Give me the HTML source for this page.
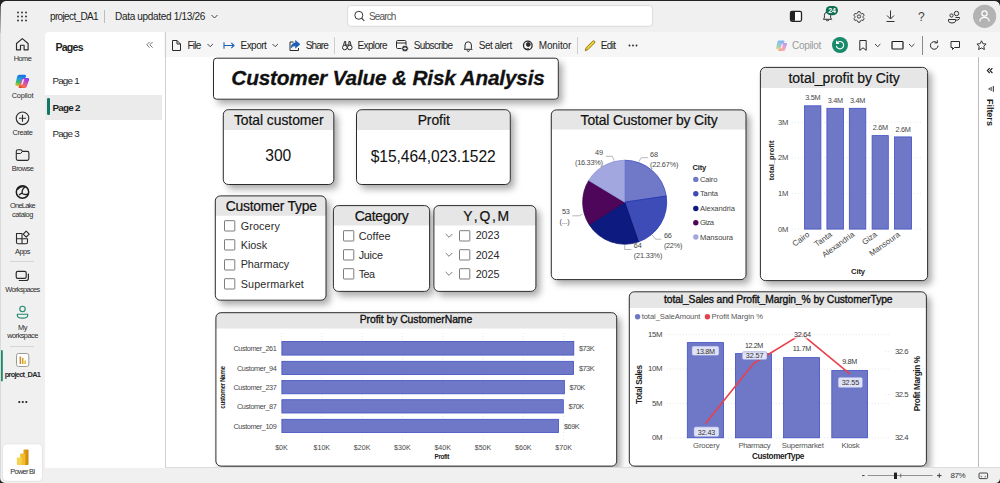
<!DOCTYPE html>
<html lang="en"><head><meta charset="utf-8"><title>project_DA1 - Power BI</title>
<style>
*{box-sizing:border-box;margin:0;padding:0}
html,body{width:1000px;height:483px;overflow:hidden;background:#f0f0f0;font-family:"Liberation Sans",sans-serif;color:#242424}
.abs{position:absolute}
#top{position:absolute;left:0;top:0;width:1000px;height:33px;background:#f0f0f0}
#nav{position:absolute;left:0;top:33px;width:45px;height:450px;background:#f0f0f0}
#pages{position:absolute;left:45px;top:32px;width:120px;height:436px;background:#fff;border-radius:4px 0 0 0}
#tool{position:absolute;left:164px;top:32px;width:836px;height:25px;background:#f6f6f6}
#canvas{position:absolute;left:166px;top:57px;width:812px;height:411px;background:#fff}
#filters{position:absolute;left:978px;top:57px;width:22px;height:411px;background:#fff;border-left:1px solid #bdbdbd}
#status{position:absolute;left:0;top:468px;width:1000px;height:15px;background:#f0f0f0}
.t{position:absolute;white-space:nowrap;line-height:1}
.nl{position:absolute;left:0;width:45px;text-align:center;font-size:7px;color:#333;line-height:1;white-space:nowrap}
.card{position:absolute;background:#fff;border:1px solid #333;border-radius:5px;box-shadow:2px 3px 4px rgba(0,0,0,.45);overflow:hidden}
.hd{position:absolute;left:0;top:0;right:0;background:#e6e6e6;text-align:center;color:#111;white-space:nowrap}
.cb{position:absolute;width:10px;height:10px;border:1px solid #555;background:#fff}
svg{position:absolute;overflow:visible}
svg text{font-family:"Liberation Sans",sans-serif}
</style></head><body>
<div id="top"></div>
<div id="nav"></div>
<div id="pages"></div>
<div id="tool"></div>
<div id="canvas"></div>
<div id="filters"></div>
<div id="status"></div>
<!-- top bar -->
<svg class="abs" style="left:0;top:0" width="1000" height="33" viewBox="0 0 1000 33">
  <!-- window dark corners -->
  <defs><linearGradient id="wl" x1="0" y1="0" x2="0" y2="1"><stop offset="0" stop-color="#222"/><stop offset="1" stop-color="#222" stop-opacity=".25"/></linearGradient></defs><path d="M0 0H1000V6A5 5 0 0 0 995 1H5.800A5 5 0 0 0 .8 6V33H0Z" fill="url(#wl)"/><path d="M0 0H1000V6A5 5 0 0 0 995 1H5.800A5 5 0 0 0 .8 6H0Z" fill="#222"/>
  <!-- waffle -->
  <g fill="#333">
    <circle cx="18" cy="12.5" r="0.95"/><circle cx="22" cy="12.5" r="0.95"/><circle cx="26" cy="12.5" r="0.95"/>
    <circle cx="18" cy="16.5" r="0.95"/><circle cx="22" cy="16.5" r="0.95"/><circle cx="26" cy="16.5" r="0.95"/>
    <circle cx="18" cy="20.5" r="0.95"/><circle cx="22" cy="20.5" r="0.95"/><circle cx="26" cy="20.5" r="0.95"/>
  </g>
  <rect x="104" y="10" width="1" height="13" fill="#bdbdbd"/>
  <path d="M211.5 15l3 3 3-3" fill="none" stroke="#444" stroke-width="1"/>
  <!-- search -->
  <rect x="347.600" y="5.600" width="305" height="20.700" rx="3" fill="#fff" stroke="#dadada"/>
  <circle cx="358.800" cy="15.300" r="4" fill="none" stroke="#333" stroke-width="1"/>
  <path d="M361.700 18.200l2.600 2.800" stroke="#333" stroke-width="1.100"/>
  <!-- panel icon -->
  <rect x="790.500" y="11.300" width="11" height="10" rx="1.500" fill="#fff" stroke="#222" stroke-width="1.300"/>
  <rect x="791" y="11.800" width="4" height="9" fill="#222"/>
  <!-- bell -->
  <path d="M823.300 19.300h8.400l-1.100-1.400v-2.700a3.100 3.100 0 0 0-6.200 0v2.700z" fill="none" stroke="#333" stroke-width="1" stroke-linejoin="round"/>
  <path d="M826.200 19.600a1.300 1.300 0 0 0 2.600 0" fill="none" stroke="#333" stroke-width="1"/>
  <rect x="825.800" y="5.900" width="12.200" height="9.300" rx="4.650" fill="#0e6e52"/>
  <!-- gear -->
  <g transform="translate(859,16.500) scale(.92)" fill="none" stroke="#333" stroke-width="1">
    <circle r="1.800"/>
    <path d="M-1.100 -5.200h2.200l.5 1.500 1.400.8 1.500-.4 1.100 1.900-1.100 1.100v1.600l1.100 1.100-1.100 1.900-1.500-.4-1.400.8-.5 1.500h-2.200l-.5-1.500-1.400-.8-1.500.4-1.100-1.900 1.100-1.100v-1.600l-1.100-1.100 1.100-1.900 1.500.4 1.400-.8z"/>
  </g>
  <!-- download -->
  <path d="M890.500 10.500v8M887 15.500l3.500 3.500 3.500-3.500M886.500 21.500h8" fill="none" stroke="#333" stroke-width="1"/>
  <!-- people -->
  <g fill="none" stroke="#333" stroke-width="1">
    <circle cx="956.500" cy="13.500" r="2.200"/><circle cx="951.500" cy="15.500" r="1.600"/>
    <path d="M948.500 19.500h7v1.500a3.500 2 0 0 1-7 0zM955.500 17.500h4v1a3 2 0 0 1-4 1.500"/>
  </g>
  <!-- avatar -->
  <circle cx="984.600" cy="16.300" r="11.600" fill="#b3b3b3"/>
  <circle cx="984.500" cy="13.500" r="2.600" fill="none" stroke="#fff" stroke-width="1.200"/>
  <path d="M979.800 21.500a4.700 4.200 0 0 1 9.400 0" fill="none" stroke="#fff" stroke-width="1.200"/>
</svg>
<div class="t" style="left:50.00px;top:11.80px;font-size:10px;color:#222;letter-spacing:-0.639px;">project_DA1</div>
<div class="t" style="left:115.00px;top:11.80px;font-size:10px;color:#222;letter-spacing:-0.309px;">Data updated 1/13/26</div>
<div class="t" style="left:369.00px;top:12.20px;font-size:10px;color:#555;letter-spacing:-0.864px;">Search</div>
<div class="t" style="left:828.15px;top:7.46px;font-size:7px;color:#fff;letter-spacing:-0.143px;font-weight:bold;">24</div>
<div class="t" style="left:917.96px;top:10.76px;font-size:12px;color:#444;">?</div>

<svg class="abs" style="left:0;top:33px" width="45" height="450" viewBox="0 33 45 450">
<!-- home -->
<path d="M16.500 49.800v-6.300l5.800-4.900 5.800 4.900v6.300h-4v-4.600h-3.600v4.600z" fill="none" stroke="#2a2a2a" stroke-width="1.150" stroke-linejoin="round"/>
<!-- copilot -->
<defs>
<linearGradient id="cgA" x1=".3" y1="0" x2=".1" y2="1"><stop offset="0" stop-color="#1b6fe4"/><stop offset=".35" stop-color="#22a0d8"/><stop offset=".65" stop-color="#3dbb63"/><stop offset="1" stop-color="#f6c21f"/></linearGradient>
<linearGradient id="cgB" x1=".8" y1="0" x2=".2" y2="1"><stop offset="0" stop-color="#7a3ff0"/><stop offset=".45" stop-color="#d94fb0"/><stop offset=".8" stop-color="#f2704a"/><stop offset="1" stop-color="#f03a22"/></linearGradient>
</defs>
<path d="M17.200 76.300Q17.700 74.800 19.300 74.800H24.800Q26.500 74.800 25.900 76.400L23.100 84.600Q22.600 86 21.100 86H16.700Q14.800 86 15.400 84.200Z" fill="url(#cgA)"/>
<path d="M21.700 79.400Q22.200 78 23.700 78H27.800Q29.700 78 29.100 79.700L26.700 86.700Q26.200 88.100 24.700 88.100H19.800Q18.100 88.100 18.700 86.600Z" fill="url(#cgB)"/>
<path d="M22.600 79.600L24.300 78.900L22.700 84.300L21 84.900Z" fill="#fff" opacity=".9"/>
<!-- create -->
<circle cx="22.500" cy="118.300" r="6.300" fill="none" stroke="#2a2a2a" stroke-width="1.100"/>
<path d="M22.500 114.800v7M19 118.300h7" stroke="#2a2a2a" stroke-width="1.100"/>
<!-- browse -->
<path d="M16.300 151.300q0-1.600 1.600-1.600h3l1.600 1.700h4.800q1.600 0 1.600 1.600v5.800q0 1.600-1.600 1.600h-9.400q-1.600 0-1.600-1.600z" fill="none" stroke="#2a2a2a" stroke-width="1.100" stroke-linejoin="round"/>
<path d="M16.300 153.500h4.300l1.900-2.100" fill="none" stroke="#2a2a2a" stroke-width="1"/>
<!-- onelake -->
<circle cx="22.500" cy="192" r="6.200" fill="none" stroke="#1d1d1d" stroke-width="1.500"/>
<path d="M17.500 189.500q3-4 7.500-2.500q-3.500 2.500-2.800 6.500q2.800 1.800 6 .3" fill="none" stroke="#1d1d1d" stroke-width="1.300"/>
<path d="M19.200 195.200q1.500-2.200 3-1.700" fill="none" stroke="#1d1d1d" stroke-width="1.200"/>
<!-- apps -->
<path d="M16.500 233.500h5.500v5.300h-5.500zM16.500 238.800h5.500v5h-4q-1.500 0-1.500-1.500zM22 238.800h5.500v3.500q0 1.500-1.500 1.500h-4z" fill="none" stroke="#2a2a2a" stroke-width="1.100" stroke-linejoin="round"/>
<path d="M26.200 231.200l3 3-3 3-3-3z" fill="none" stroke="#2a2a2a" stroke-width="1.100" stroke-linejoin="round"/>
<rect x="10" y="261" width="24" height="1" fill="#d4d4d4"/>
<!-- workspaces -->
<rect x="16.200" y="271.300" width="10" height="7" rx="1.600" fill="none" stroke="#2a2a2a" stroke-width="1.200"/>
<path d="M28.400 274v4.300q0 2.200-2.200 2.200h-7" fill="none" stroke="#2a2a2a" stroke-width="1.200" stroke-linecap="round"/>
<!-- my workspace -->
<circle cx="22.500" cy="309" r="2.700" fill="none" stroke="#1a8a6a" stroke-width="1.100"/>
<path d="M17.300 314.300h10.400v1.200q0 2.600-5.200 2.600t-5.200-2.600z" fill="none" stroke="#1a8a6a" stroke-width="1.100" stroke-linejoin="round"/>
<rect x="10" y="346" width="24" height="1" fill="#d4d4d4"/>
<!-- project -->
<rect x="1" y="350" width="1.800" height="31.500" rx=".9" fill="#1a8a6a"/>
<rect x="16.500" y="353.500" width="12.300" height="13" rx="2" fill="#fff" stroke="#9a9a9a" stroke-width="1"/>
<rect x="19.600" y="356.500" width="1.500" height="7.500" fill="#c98a1e"/><rect x="22" y="358" width="1.500" height="6" fill="#d9a02b"/><rect x="24.400" y="360.500" width="1.500" height="3.500" fill="#e6b437"/>
<circle cx="19.300" cy="402" r="1.100" fill="#222"/><circle cx="22.800" cy="402" r="1.100" fill="#222"/><circle cx="26.300" cy="402" r="1.100" fill="#222"/>
<!-- power bi card -->
<rect x="2.500" y="443.800" width="40" height="37.500" rx="4.500" fill="#fff" stroke="#e0e0e0" stroke-width=".8"/>
<defs><linearGradient id="pb1" x1="0" y1="0" x2="1" y2="0"><stop offset="0" stop-color="#e8a614"/><stop offset="1" stop-color="#c9860c"/></linearGradient></defs>
<rect x="23.500" y="449.500" width="5" height="15.500" rx=".8" fill="url(#pb1)"/>
<rect x="20.200" y="453.500" width="5" height="11.500" rx=".8" fill="#f0bd2e"/>
<rect x="16.900" y="457.500" width="5" height="7.500" rx=".8" fill="#f6d24f"/>
<!-- bottom-left window corner -->
<rect x="0" y="33" width=".7" height="450" fill="#000" opacity=".13"/><path d="M0 483V478a5 5 0 0 0 5 5z" fill="#222"/>
</svg>
<div class="t" style="left:13.75px;top:55.35px;font-size:7.4px;color:#2b2b2b;letter-spacing:-0.560px;">Home</div>
<div class="t" style="left:11.75px;top:92.05px;font-size:7.4px;color:#2b2b2b;letter-spacing:-0.219px;">Copilot</div>
<div class="t" style="left:12.50px;top:128.65px;font-size:7.4px;color:#2b2b2b;letter-spacing:-0.368px;">Create</div>
<div class="t" style="left:11.75px;top:165.35px;font-size:7.4px;color:#2b2b2b;letter-spacing:-0.529px;">Browse</div>
<div class="t" style="left:10.00px;top:202.25px;font-size:7.4px;color:#2b2b2b;letter-spacing:-0.719px;">OneLake</div>
<div class="t" style="left:12.00px;top:210.95px;font-size:7.4px;color:#2b2b2b;letter-spacing:-0.409px;">catalog</div>
<div class="t" style="left:15.00px;top:247.85px;font-size:7.4px;color:#2b2b2b;letter-spacing:-0.467px;">Apps</div>
<div class="t" style="left:5.25px;top:286.35px;font-size:7.4px;color:#2b2b2b;letter-spacing:-0.608px;">Workspaces</div>
<div class="t" style="left:18.00px;top:323.55px;font-size:7.4px;color:#2b2b2b;letter-spacing:-0.432px;">My</div>
<div class="t" style="left:7.25px;top:331.95px;font-size:7.4px;color:#2b2b2b;letter-spacing:-0.541px;">workspace</div>
<div class="t" style="left:4.75px;top:370.65px;font-size:7.4px;color:#2b2b2b;letter-spacing:-0.735px;font-weight:bold;">project_DA1</div>
<div class="t" style="left:10.25px;top:467.95px;font-size:7.4px;color:#2b2b2b;letter-spacing:-0.690px;">Power BI</div>

<div class="abs" style="left:45px;top:94.500px;width:117px;height:25px;background:#ebebeb"></div>
<div class="abs" style="left:47px;top:97.500px;width:2.500px;height:17.500px;background:#117865;border-radius:1.200px"></div>
<div class="abs" style="left:165px;top:32px;width:1px;height:436px;background:#d0d0d0"></div>
<svg class="abs" style="left:146px;top:41px" width="8" height="8" viewBox="0 0 8 8"><path d="M3.600 1L.8 3.800l2.800 2.800M6.600 1L3.800 3.800l2.800 2.800" fill="none" stroke="#555" stroke-width=".8"/></svg>
<div class="t" style="left:55.40px;top:42.49px;font-size:10.6px;color:#1f1f1f;letter-spacing:-0.746px;font-weight:bold;">Pages</div>
<div class="t" style="left:52.40px;top:76.00px;font-size:9.8px;color:#1f1f1f;letter-spacing:-0.760px;">Page 1</div>
<div class="t" style="left:52.40px;top:102.80px;font-size:9.8px;color:#1f1f1f;letter-spacing:-0.682px;font-weight:bold;">Page 2</div>
<div class="t" style="left:52.40px;top:129.00px;font-size:9.8px;color:#1f1f1f;letter-spacing:-0.760px;">Page 3</div>

<svg class="abs" style="left:166px;top:33px" width="834" height="24" viewBox="166 33 834 24"><defs><linearGradient id="cgA2" x1=".3" y1="0" x2=".1" y2="1"><stop offset="0" stop-color="#1b6fe4"/><stop offset=".35" stop-color="#22a0d8"/><stop offset=".65" stop-color="#3dbb63"/><stop offset="1" stop-color="#f6c21f"/></linearGradient><linearGradient id="cgB2" x1=".8" y1="0" x2=".2" y2="1"><stop offset="0" stop-color="#7a3ff0"/><stop offset=".45" stop-color="#d94fb0"/><stop offset=".8" stop-color="#f2704a"/><stop offset="1" stop-color="#f03a22"/></linearGradient></defs>
<g fill="none" stroke="#2a2a2a" stroke-width="1" stroke-linejoin="round">
<!-- file -->
<path d="M172.500 40.500h4.500l3.500 3.500v6.500h-8zM177 40.500v3.500h3.500"/>
<path d="M207.500 44l2.700 2.700 2.700-2.700" stroke="#444"/>
<!-- export -->
<path d="M224 42.300v6.400M224 45.500h10M231.300 42.800l2.700 2.700-2.700 2.700" stroke="#1a5fb4" stroke-width="1.100"/>
<path d="M272.500 44l2.700 2.700 2.700-2.700" stroke="#444"/>
<!-- share -->
<path d="M293.500 42h-3.500v8.500h8.500v-2.500"/>
<path d="M295.500 40.500l4.500 3.800-4.500 3.800v-2.300q-3 0-4.500 2.200 .3-5 4.500-5.300z" fill="#1a5fb4" stroke="#1a5fb4" stroke-width=".6"/>
<!-- explore -->
<circle cx="344.800" cy="47.500" r="2.300"/><circle cx="349.800" cy="47.500" r="2.300"/><path d="M343.500 45.500l1-4h1.200v4M351.100 45.500l-1-4h-1.200v4M346 45h2.600"/>
<!-- subscribe -->
<rect x="396.500" y="40.500" width="9.500" height="8" rx="1.200"/><path d="M396.500 43h9.500"/>
<circle cx="405" cy="48.500" r="3.300" fill="#2a2a2a" stroke="#f6f6f6" stroke-width=".8"/>
<path d="M405 46.800v3.400M403.300 48.500h3.400" stroke="#fff" stroke-width=".9"/>
<!-- bell -->
<path d="M465 48.500v-3.500a3.200 3.200 0 0 1 6.400 0v3.500l.8.800h-8z"/><path d="M467.200 50.300a1.100 1.100 0 0 0 2.200 0"/>
<!-- monitor -->
<circle cx="527.800" cy="45.500" r="4.300" stroke-width="1.300"/><circle cx="528.300" cy="44.500" r="1.900" fill="#2a2a2a"/>
<path d="M524.500 48.500q2 .8 4.500.2"/>
<!-- pencil -->
<path d="M585.300 50.700l.8-2.900 6.600-6.600q.9-.9 1.800 0t0 1.800l-6.600 6.600z" stroke="#8a6a00" fill="#f2d23a" stroke-width=".9"/>
<!-- copilot small -->
<!-- bookmark -->
<path d="M859.800 40.500h6.400v9.800l-3.200-2.500-3.200 2.500z" stroke-width="1"/>
<path d="M875 44l2.700 2.700 2.700-2.700" stroke="#444"/>
<rect x="892" y="41.500" width="11" height="7.500" rx=".8" stroke-width="1.200" stroke="#1a1a1a"/>
<path d="M909 44l2.700 2.700 2.700-2.700" stroke="#444"/>
<!-- refresh -->
<path d="M938 45.500a3.800 3.800 0 1 1-1.300-2.900M937.300 40.300v2.600h-2.600"/>
<!-- comment -->
<path d="M951 41.500h8.500v6h-5l-2 2v-2h-1.500z"/>
<!-- star -->
<path d="M981.500 40.800l1.400 2.900 3.200.4-2.300 2.200.6 3.200-2.900-1.500-2.900 1.500.6-3.200-2.300-2.200 3.200-.4z" stroke-width=".95"/>
</g>
<rect x="334" y="37" width="1" height="17" fill="#cfcfcf"/>
<rect x="577" y="37" width="1" height="17" fill="#cfcfcf"/>
<rect x="922" y="36" width="1" height="19" fill="#8a8a8a"/>
<circle cx="629.500" cy="45.500" r=".9" fill="#222"/><circle cx="633" cy="45.500" r=".9" fill="#222"/><circle cx="636.500" cy="45.500" r=".9" fill="#222"/>
<!-- copilot faded -->
<g opacity=".5" transform="translate(763.700,-19.400) scale(.8)">
<path d="M17.200 76.300Q17.700 74.800 19.300 74.800H24.800Q26.500 74.800 25.900 76.400L23.100 84.600Q22.600 86 21.100 86H16.700Q14.800 86 15.400 84.200Z" fill="url(#cgA2)"/>
<path d="M21.700 79.400Q22.200 78 23.700 78H27.800Q29.700 78 29.100 79.700L26.700 86.700Q26.200 88.100 24.700 88.100H19.800Q18.100 88.100 18.700 86.600Z" fill="url(#cgB2)"/>
<path d="M22.600 79.600L24.300 78.900L22.700 84.300L21 84.900Z" fill="#fff" opacity=".9"/>
</g>
<circle cx="840" cy="45" r="8" fill="#168a6a"/>
<path d="M836.800 43.200a3.700 3.700 0 1 1-.5 2.600M836.600 40.800v2.600h2.600" fill="none" stroke="#fff" stroke-width="1.100"/>
</svg>
<div class="t" style="left:187.40px;top:40.80px;font-size:10px;color:#242424;letter-spacing:-0.703px;">File</div>
<div class="t" style="left:240.50px;top:40.80px;font-size:10px;color:#242424;letter-spacing:-0.533px;">Export</div>
<div class="t" style="left:305.70px;top:40.80px;font-size:10px;color:#242424;letter-spacing:-0.877px;">Share</div>
<div class="t" style="left:357.50px;top:40.80px;font-size:10px;color:#242424;letter-spacing:-0.629px;">Explore</div>
<div class="t" style="left:413.70px;top:40.80px;font-size:10px;color:#242424;letter-spacing:-0.630px;">Subscribe</div>
<div class="t" style="left:478.70px;top:40.80px;font-size:10px;color:#242424;letter-spacing:-0.471px;">Set alert</div>
<div class="t" style="left:538.70px;top:40.80px;font-size:10px;color:#242424;letter-spacing:-0.120px;">Monitor</div>
<div class="t" style="left:600.70px;top:40.80px;font-size:10px;color:#242424;letter-spacing:-0.608px;">Edit</div>
<div class="t" style="left:792.00px;top:40.80px;font-size:10px;color:#9a9a9a;letter-spacing:-0.304px;">Copilot</div>

<svg style="left:166px;top:57px;overflow:hidden" width="812" height="411" viewBox="166 57 812 411"><defs><filter id="sh" x="-10%" y="-15%" width="135%" height="150%"><feDropShadow dx="4" dy="4.500" stdDeviation="3.800" flood-color="#000" flood-opacity=".34"/></filter></defs><rect x="213.50" y="58.20" width="344.80" height="41.00" rx="3" fill="#fff" filter="url(#sh)"/><rect x="213.50" y="58.20" width="344.80" height="41.00" rx="3" fill="none" stroke="#2b2b2b" stroke-width="1"/>
<rect x="223.30" y="109.70" width="110.50" height="74.80" rx="5" fill="#fff" filter="url(#sh)"/><path d="M223.30 130.00V114.70a5 5 0 0 1 5 -5H328.80a5 5 0 0 1 5 5V130.00z" fill="#e6e6e6"/><rect x="223.30" y="109.70" width="110.50" height="74.80" rx="5" fill="none" stroke="#2b2b2b" stroke-width="1"/>
<rect x="356.50" y="109.70" width="153.80" height="74.80" rx="5" fill="#fff" filter="url(#sh)"/><path d="M356.50 130.00V114.70a5 5 0 0 1 5 -5H505.30a5 5 0 0 1 5 5V130.00z" fill="#e6e6e6"/><rect x="356.50" y="109.70" width="153.80" height="74.80" rx="5" fill="none" stroke="#2b2b2b" stroke-width="1"/>
<rect x="215.30" y="195.90" width="110.70" height="104.30" rx="5" fill="#fff" filter="url(#sh)"/><path d="M215.30 215.70V200.90a5 5 0 0 1 5 -5H321.00a5 5 0 0 1 5 5V215.70z" fill="#e6e6e6"/><rect x="215.30" y="195.90" width="110.70" height="104.30" rx="5" fill="none" stroke="#2b2b2b" stroke-width="1"/>
<rect x="333.40" y="205.60" width="96.20" height="85.80" rx="5" fill="#fff" filter="url(#sh)"/><path d="M333.40 225.50V210.60a5 5 0 0 1 5 -5H424.60a5 5 0 0 1 5 5V225.50z" fill="#e6e6e6"/><rect x="333.40" y="205.60" width="96.20" height="85.80" rx="5" fill="none" stroke="#2b2b2b" stroke-width="1"/>
<rect x="433.90" y="205.60" width="102.00" height="85.80" rx="5" fill="#fff" filter="url(#sh)"/><path d="M433.90 225.50V210.60a5 5 0 0 1 5 -5H530.90a5 5 0 0 1 5 5V225.50z" fill="#e6e6e6"/><rect x="433.90" y="205.60" width="102.00" height="85.80" rx="5" fill="none" stroke="#2b2b2b" stroke-width="1"/>
<rect x="551.30" y="109.90" width="194.70" height="169.70" rx="5" fill="#fff" filter="url(#sh)"/><path d="M551.30 129.50V114.90a5 5 0 0 1 5 -5H741.00a5 5 0 0 1 5 5V129.50z" fill="#e6e6e6"/><rect x="551.30" y="109.90" width="194.70" height="169.70" rx="5" fill="none" stroke="#2b2b2b" stroke-width="1"/>
<rect x="760.40" y="67.40" width="167.20" height="213.20" rx="5" fill="#fff" filter="url(#sh)"/><path d="M760.40 87.90V72.40a5 5 0 0 1 5 -5H922.60a5 5 0 0 1 5 5V87.90z" fill="#e6e6e6"/><rect x="760.40" y="67.40" width="167.20" height="213.20" rx="5" fill="none" stroke="#2b2b2b" stroke-width="1"/>
<rect x="215.90" y="312.70" width="400.80" height="153.40" rx="5" fill="#fff" filter="url(#sh)"/><path d="M215.90 328.40V317.70a5 5 0 0 1 5 -5H611.70a5 5 0 0 1 5 5V328.40z" fill="#e6e6e6"/><rect x="215.90" y="312.70" width="400.80" height="153.40" rx="5" fill="none" stroke="#2b2b2b" stroke-width="1"/>
<rect x="629.30" y="291.80" width="297.10" height="174.30" rx="5" fill="#fff" filter="url(#sh)"/><path d="M629.30 307.90V296.80a5 5 0 0 1 5 -5H921.40a5 5 0 0 1 5 5V307.90z" fill="#e6e6e6"/><rect x="629.30" y="291.80" width="297.10" height="174.30" rx="5" fill="none" stroke="#2b2b2b" stroke-width="1"/></svg>
<div class="t" style="left:231.30px;top:67.98px;font-size:20.8px;color:#111;letter-spacing:-0.172px;font-weight:bold;font-style:italic;-webkit-text-stroke:0.3px #111;">Customer Value &amp; Risk Analysis</div>
<div class="t" style="left:233.95px;top:114.37px;font-size:13.9px;color:#111;letter-spacing:-0.048px;-webkit-text-stroke:0.2px #111;">Total customer</div>
<div class="t" style="left:265.35px;top:148.39px;font-size:15.6px;color:#111;letter-spacing:-0.042px;">300</div>
<div class="t" style="left:417.65px;top:114.37px;font-size:13.9px;color:#111;letter-spacing:-0.057px;-webkit-text-stroke:0.2px #111;">Profit</div>
<div class="t" style="left:370.70px;top:148.59px;font-size:15.6px;color:#111;letter-spacing:-0.049px;">$15,464,023.1522</div>
<div class="t" style="left:225.70px;top:200.37px;font-size:13.9px;color:#111;letter-spacing:-0.230px;-webkit-text-stroke:0.2px #111;">Customer Type</div>
<svg style="left:223.4px;top:218.9px" width="14" height="14" viewBox="0 0 14 14"><rect x="1.500" y="1.700" width="10.300" height="10.300" rx=".5" fill="#fff" stroke="#6e6e6e" stroke-width=".9"/></svg>
<div class="t" style="left:240.70px;top:220.78px;font-size:10.8px;color:#2a2a2a;letter-spacing:0.128px;">Grocery</div>
<svg style="left:223.4px;top:238.3px" width="14" height="14" viewBox="0 0 14 14"><rect x="1.500" y="1.700" width="10.300" height="10.300" rx=".5" fill="#fff" stroke="#6e6e6e" stroke-width=".9"/></svg>
<div class="t" style="left:240.70px;top:240.18px;font-size:10.8px;color:#2a2a2a;letter-spacing:0.018px;">Kiosk</div>
<svg style="left:223.4px;top:257.6px" width="14" height="14" viewBox="0 0 14 14"><rect x="1.500" y="1.700" width="10.300" height="10.300" rx=".5" fill="#fff" stroke="#6e6e6e" stroke-width=".9"/></svg>
<div class="t" style="left:240.70px;top:259.48px;font-size:10.8px;color:#2a2a2a;letter-spacing:-0.014px;">Pharmacy</div>
<svg style="left:223.4px;top:276.8px" width="14" height="14" viewBox="0 0 14 14"><rect x="1.500" y="1.700" width="10.300" height="10.300" rx=".5" fill="#fff" stroke="#6e6e6e" stroke-width=".9"/></svg>
<div class="t" style="left:240.70px;top:278.68px;font-size:10.8px;color:#2a2a2a;letter-spacing:0.134px;">Supermarket</div>
<div class="t" style="left:354.65px;top:210.07px;font-size:13.9px;color:#111;letter-spacing:-0.312px;-webkit-text-stroke:0.2px #111;">Category</div>
<svg style="left:341.6px;top:228.7px" width="14" height="14" viewBox="0 0 14 14"><rect x="1.500" y="1.700" width="10.300" height="10.300" rx=".5" fill="#fff" stroke="#6e6e6e" stroke-width=".9"/></svg>
<div class="t" style="left:358.70px;top:230.58px;font-size:10.8px;color:#2a2a2a;letter-spacing:0.046px;">Coffee</div>
<svg style="left:341.6px;top:248.1px" width="14" height="14" viewBox="0 0 14 14"><rect x="1.500" y="1.700" width="10.300" height="10.300" rx=".5" fill="#fff" stroke="#6e6e6e" stroke-width=".9"/></svg>
<div class="t" style="left:358.70px;top:249.98px;font-size:10.8px;color:#2a2a2a;letter-spacing:-0.242px;">Juice</div>
<svg style="left:341.6px;top:266.8px" width="14" height="14" viewBox="0 0 14 14"><rect x="1.500" y="1.700" width="10.300" height="10.300" rx=".5" fill="#fff" stroke="#6e6e6e" stroke-width=".9"/></svg>
<div class="t" style="left:358.70px;top:268.68px;font-size:10.8px;color:#2a2a2a;letter-spacing:-0.537px;">Tea</div>
<div class="t" style="left:463.15px;top:210.07px;font-size:13.9px;color:#111;letter-spacing:-1.075px;-webkit-text-stroke:0.2px #111;">Y , Q , M</div>
<svg style="left:445px;top:232.5px" width="8" height="6" viewBox="0 0 8 6"><path d="M.7 1l3.300 3.300L7.300 1" fill="none" stroke="#666" stroke-width=".9"/></svg>
<svg style="left:458.2px;top:228.5px" width="14" height="14" viewBox="0 0 14 14"><rect x="1.500" y="1.700" width="10.300" height="10.300" rx=".5" fill="#fff" stroke="#6e6e6e" stroke-width=".9"/></svg>
<div class="t" style="left:475.70px;top:230.38px;font-size:10.8px;color:#2a2a2a;letter-spacing:-0.106px;">2023</div>
<svg style="left:445px;top:252.0px" width="8" height="6" viewBox="0 0 8 6"><path d="M.7 1l3.300 3.300L7.300 1" fill="none" stroke="#666" stroke-width=".9"/></svg>
<svg style="left:458.2px;top:248.0px" width="14" height="14" viewBox="0 0 14 14"><rect x="1.500" y="1.700" width="10.300" height="10.300" rx=".5" fill="#fff" stroke="#6e6e6e" stroke-width=".9"/></svg>
<div class="t" style="left:475.70px;top:249.88px;font-size:10.8px;color:#2a2a2a;letter-spacing:-0.106px;">2024</div>
<svg style="left:445px;top:270.8px" width="8" height="6" viewBox="0 0 8 6"><path d="M.7 1l3.300 3.300L7.300 1" fill="none" stroke="#666" stroke-width=".9"/></svg>
<svg style="left:458.2px;top:266.8px" width="14" height="14" viewBox="0 0 14 14"><rect x="1.500" y="1.700" width="10.300" height="10.300" rx=".5" fill="#fff" stroke="#6e6e6e" stroke-width=".9"/></svg>
<div class="t" style="left:475.70px;top:268.68px;font-size:10.8px;color:#2a2a2a;letter-spacing:-0.106px;">2025</div>
<div class="t" style="left:580.60px;top:114.47px;font-size:13.9px;color:#111;letter-spacing:-0.128px;-webkit-text-stroke:0.2px #111;">Total Customer by City</div>
<svg style="left:551px;top:110px" width="195" height="170" viewBox="551 110 195 170">
<path d="M624.7 202.2L624.70 160.20A42 42 0 0 1 666.25 196.06Z" fill="#6f79c8" stroke="#3a48c0" stroke-width=".8" stroke-linejoin="round"/>
<path d="M624.7 202.2L666.25 196.06A42 42 0 0 1 638.51 241.86Z" fill="#3d4cb6" stroke="#2236b0" stroke-width=".8" stroke-linejoin="round"/>
<path d="M624.7 202.2L638.51 241.86A42 42 0 0 1 589.24 224.70Z" fill="#0d1a80" stroke="#06106a" stroke-width=".8" stroke-linejoin="round"/>
<path d="M624.7 202.2L589.24 224.70A42 42 0 0 1 588.77 180.44Z" fill="#4d0659" stroke="#3a0348" stroke-width=".8" stroke-linejoin="round"/>
<path d="M624.7 202.2L588.77 180.44A42 42 0 0 1 624.70 160.20Z" fill="#a2a7df" stroke="#8f96dc" stroke-width=".8" stroke-linejoin="round"/>
<g fill="none" stroke="#a6a6a6" stroke-width=".8"><path d="M605.900 156.300h6.300l2.100 4.200"/><path d="M639 161.300l2.200-3.600h6.700"/><path d="M572.300 215.800h6.900l3.400-1.600"/><path d="M652 234.700l3.500 4.500h5.700"/><path d="M624.700 245v4.500h6.800"/></g>
<circle cx="695.800" cy="179.4" r="2.700" fill="#6f79c8"/><circle cx="695.800" cy="193.7" r="2.700" fill="#3d4cb6"/><circle cx="695.800" cy="208.5" r="2.700" fill="#0d1a80"/><circle cx="695.800" cy="222.8" r="2.700" fill="#4d0659"/><circle cx="695.800" cy="237" r="2.700" fill="#a2a7df"/></svg>
<div class="t" style="left:595.10px;top:149.30px;font-size:7.3px;color:#484848;letter-spacing:-0.259px;">49</div>
<div class="t" style="left:575.00px;top:159.10px;font-size:7.3px;color:#484848;letter-spacing:-0.240px;">(16.33%)</div>
<div class="t" style="left:650.00px;top:150.90px;font-size:7.3px;color:#484848;letter-spacing:-0.159px;">68</div>
<div class="t" style="left:650.00px;top:160.70px;font-size:7.3px;color:#484848;letter-spacing:-0.177px;">(22.67%)</div>
<div class="t" style="left:562.00px;top:207.90px;font-size:7.3px;color:#484848;letter-spacing:-0.259px;">53</div>
<div class="t" style="left:559.60px;top:218.40px;font-size:7.3px;color:#484848;letter-spacing:-0.189px;">(...)</div>
<div class="t" style="left:663.90px;top:231.80px;font-size:7.3px;color:#484848;letter-spacing:-0.259px;">66</div>
<div class="t" style="left:663.90px;top:241.60px;font-size:7.3px;color:#484848;letter-spacing:-0.254px;">(22%)</div>
<div class="t" style="left:633.80px;top:242.10px;font-size:7.3px;color:#484848;letter-spacing:-0.159px;">64</div>
<div class="t" style="left:633.80px;top:251.90px;font-size:7.3px;color:#484848;letter-spacing:-0.152px;">(21.33%)</div>
<div class="t" style="left:692.60px;top:164.15px;font-size:7.6px;color:#222;letter-spacing:-0.239px;font-weight:bold;">City</div>
<div class="t" style="left:700.00px;top:175.95px;font-size:7.6px;color:#444;letter-spacing:-0.192px;">Cairo</div>
<div class="t" style="left:700.00px;top:190.25px;font-size:7.6px;color:#444;letter-spacing:-0.178px;">Tanta</div>
<div class="t" style="left:700.00px;top:205.05px;font-size:7.6px;color:#444;letter-spacing:-0.111px;">Alexandria</div>
<div class="t" style="left:700.00px;top:219.35px;font-size:7.6px;color:#444;letter-spacing:-0.532px;">Giza</div>
<div class="t" style="left:700.00px;top:233.55px;font-size:7.6px;color:#444;letter-spacing:-0.099px;">Mansoura</div>
<div class="t" style="left:788.45px;top:70.92px;font-size:14px;color:#111;letter-spacing:-0.037px;-webkit-text-stroke:0.2px #111;">total_profit by City</div>
<svg style="left:760px;top:67px" width="168" height="214" viewBox="760 67 168 214">
<g stroke="#d8d8d8" stroke-width=".8" stroke-dasharray=".8 2.400"><path d="M792 229.1H921"/><path d="M792 193.5H921"/><path d="M792 157.9H921"/><path d="M792 122.3H921"/></g>
<rect x="804.5" y="105.8" width="16.4" height="123.3" fill="#6e78c7" stroke="#4251c3" stroke-width=".8"/><text x="810.2" y="235.6" font-size="8" fill="#444" text-anchor="end" transform="rotate(-36 810.2 235.6)">Cairo</text>
<rect x="826.9" y="108.3" width="16.6" height="120.8" fill="#6e78c7" stroke="#4251c3" stroke-width=".8"/><text x="832.7" y="235.6" font-size="8" fill="#444" text-anchor="end" transform="rotate(-36 832.7 235.6)">Tanta</text>
<rect x="849.3" y="108.3" width="16.5" height="120.8" fill="#6e78c7" stroke="#4251c3" stroke-width=".8"/><text x="855.0" y="235.6" font-size="8" fill="#444" text-anchor="end" transform="rotate(-36 855.0 235.6)">Alexandria</text>
<rect x="872.1" y="135.6" width="16.2" height="93.5" fill="#6e78c7" stroke="#4251c3" stroke-width=".8"/><text x="877.7" y="235.6" font-size="8" fill="#444" text-anchor="end" transform="rotate(-36 877.7 235.6)">Giza</text>
<rect x="894.5" y="136.9" width="17.1" height="92.2" fill="#6e78c7" stroke="#4251c3" stroke-width=".8"/><text x="900.5" y="235.6" font-size="8" fill="#444" text-anchor="end" transform="rotate(-36 900.5 235.6)">Mansoura</text>
<text x="771" y="160.400" font-size="7.600" font-weight="bold" fill="#222" text-anchor="middle" transform="rotate(-90 771 160.400)" dy="2.600" textLength="39.700">total_profit</text></svg>
<div class="t" style="left:805.20px;top:94.40px;font-size:7.3px;color:#484848;letter-spacing:-0.307px;">3.5M</div>
<div class="t" style="left:827.70px;top:97.20px;font-size:7.3px;color:#484848;letter-spacing:-0.307px;">3.4M</div>
<div class="t" style="left:850.05px;top:97.20px;font-size:7.3px;color:#484848;letter-spacing:-0.307px;">3.4M</div>
<div class="t" style="left:872.70px;top:124.20px;font-size:7.3px;color:#484848;letter-spacing:-0.307px;">2.6M</div>
<div class="t" style="left:895.55px;top:125.70px;font-size:7.3px;color:#484848;letter-spacing:-0.307px;">2.6M</div>
<div class="t" style="left:778.00px;top:225.65px;font-size:7.6px;color:#484848;letter-spacing:-0.278px;">0M</div>
<div class="t" style="left:778.00px;top:190.05px;font-size:7.6px;color:#484848;letter-spacing:-0.278px;">1M</div>
<div class="t" style="left:778.00px;top:154.45px;font-size:7.6px;color:#484848;letter-spacing:-0.278px;">2M</div>
<div class="t" style="left:778.00px;top:118.85px;font-size:7.6px;color:#484848;letter-spacing:-0.278px;">3M</div>
<div class="t" style="left:851.00px;top:267.85px;font-size:7.6px;color:#222;letter-spacing:-0.089px;font-weight:bold;">City</div>
<div class="t" style="left:359.75px;top:315.39px;font-size:10.4px;color:#111;letter-spacing:-0.061px;-webkit-text-stroke:0.35px #111;">Profit by CustomerName</div>
<svg style="left:216px;top:313px" width="401" height="153" viewBox="216 313 401 153">
<g stroke="#d8d8d8" stroke-width=".8" stroke-dasharray=".8 2.400"><path d="M281.5 333V442"/><path d="M321.8 333V442"/><path d="M362.1 333V442"/><path d="M402.4 333V442"/><path d="M442.7 333V442"/><path d="M483.0 333V442"/><path d="M523.3 333V442"/><path d="M563.6 333V442"/></g>
<rect x="281.9" y="341.4" width="291.9" height="13.7" fill="#6e78c7" stroke="#4251c3" stroke-width=".8"/><rect x="281.9" y="361.3" width="291.7" height="13.3" fill="#6e78c7" stroke="#4251c3" stroke-width=".8"/><rect x="281.9" y="380.5" width="282.5" height="13.3" fill="#6e78c7" stroke="#4251c3" stroke-width=".8"/><rect x="281.9" y="399.7" width="281.4" height="13.3" fill="#6e78c7" stroke="#4251c3" stroke-width=".8"/><rect x="281.9" y="419.3" width="276.7" height="13.3" fill="#6e78c7" stroke="#4251c3" stroke-width=".8"/><text x="223.100" y="387.300" font-size="6.400" font-weight="bold" fill="#222" text-anchor="middle" transform="rotate(-90 223.100 387.300)" dy="2.200" textLength="42.700">customer Name</text></svg>
<div class="t" style="left:233.40px;top:344.95px;font-size:7.3px;color:#484848;letter-spacing:-0.406px;">Customer_261</div>
<div class="t" style="left:578.90px;top:344.95px;font-size:7.3px;color:#484848;letter-spacing:-0.462px;">$73K</div>
<div class="t" style="left:237.00px;top:364.65px;font-size:7.3px;color:#484848;letter-spacing:-0.402px;">Customer_94</div>
<div class="t" style="left:578.90px;top:364.65px;font-size:7.3px;color:#484848;letter-spacing:-0.462px;">$73K</div>
<div class="t" style="left:233.40px;top:383.85px;font-size:7.3px;color:#484848;letter-spacing:-0.406px;">Customer_237</div>
<div class="t" style="left:569.50px;top:383.85px;font-size:7.3px;color:#484848;letter-spacing:-0.462px;">$70K</div>
<div class="t" style="left:237.00px;top:403.05px;font-size:7.3px;color:#484848;letter-spacing:-0.402px;">Customer_87</div>
<div class="t" style="left:568.50px;top:403.05px;font-size:7.3px;color:#484848;letter-spacing:-0.462px;">$70K</div>
<div class="t" style="left:233.40px;top:422.65px;font-size:7.3px;color:#484848;letter-spacing:-0.406px;">Customer_109</div>
<div class="t" style="left:564.00px;top:422.65px;font-size:7.3px;color:#484848;letter-spacing:-0.462px;">$69K</div>
<div class="t" style="left:275.18px;top:444.71px;font-size:7.1px;color:#484848;">$0K</div>
<div class="t" style="left:313.51px;top:444.71px;font-size:7.1px;color:#484848;">$10K</div>
<div class="t" style="left:353.81px;top:444.71px;font-size:7.1px;color:#484848;">$20K</div>
<div class="t" style="left:394.11px;top:444.71px;font-size:7.1px;color:#484848;">$30K</div>
<div class="t" style="left:434.41px;top:444.71px;font-size:7.1px;color:#484848;">$40K</div>
<div class="t" style="left:474.71px;top:444.71px;font-size:7.1px;color:#484848;">$50K</div>
<div class="t" style="left:515.01px;top:444.71px;font-size:7.1px;color:#484848;">$60K</div>
<div class="t" style="left:555.31px;top:444.71px;font-size:7.1px;color:#484848;">$70K</div>
<div class="t" style="left:434.55px;top:454.47px;font-size:6.4px;color:#222;letter-spacing:-0.368px;font-weight:bold;">Profit</div>
<div class="t" style="left:664.10px;top:295.14px;font-size:10.3px;color:#111;letter-spacing:-0.110px;-webkit-text-stroke:0.35px #111;">total_Sales and Profit_Margin_% by CustomerType</div>
<svg style="left:629px;top:292px" width="298" height="174" viewBox="629 292 298 174">
<g stroke="#d8d8d8" stroke-width=".8" stroke-dasharray=".8 2.400"><path d="M667 437.8H891"/><path d="M667 403.4H891"/><path d="M667 369.0H891"/><path d="M667 334.6H891"/><path d="M885 351.700H892"/><path d="M885 394.600H892"/></g>
<rect x="687.3" y="342.6" width="36.3" height="95.2" fill="#6e78c7" stroke="#4251c3" stroke-width=".8"/><rect x="735.4" y="353.6" width="36.1" height="84.2" fill="#6e78c7" stroke="#4251c3" stroke-width=".8"/><rect x="783.6" y="357.6" width="36.0" height="80.2" fill="#6e78c7" stroke="#4251c3" stroke-width=".8"/><rect x="831.8" y="370.5" width="35.8" height="67.3" fill="#6e78c7" stroke="#4251c3" stroke-width=".8"/><circle cx="637.600" cy="316.700" r="2.700" fill="#6e78c6"/><circle cx="707.400" cy="316.700" r="2.700" fill="#e0434f"/><path d="M705.500 423.500L753.500 363.500L801.600 334.100L849.800 373.800" fill="none" stroke="#e8414c" stroke-width="1.600" stroke-linejoin="round"/>
<rect x="691.9" y="346.1" width="27.1" height="9.4" rx="1.800" fill="#e0e2f6" stroke="#7a84d0" stroke-width=".5"/><rect x="742.2" y="351.7" width="24.8" height="8.0" rx="1.800" fill="#e0e2f6" stroke="#7a84d0" stroke-width=".5"/><rect x="693.9" y="426.8" width="25.1" height="9.9" rx="1.800" fill="#e0e2f6" stroke="#7a84d0" stroke-width=".5"/><rect x="838.1" y="377.2" width="24.6" height="10.5" rx="1.800" fill="#e0e2f6" stroke="#7a84d0" stroke-width=".5"/><rect x="793.500" y="330" width="18" height="8.500" fill="#fff" opacity=".75"/><text x="639.300" y="384.400" font-size="8.200" font-weight="bold" fill="#222" text-anchor="middle" transform="rotate(-90 639.300 384.400)" dy="2.800" textLength="39">Total Sales</text><text x="917.300" y="383.500" font-size="8.200" font-weight="bold" fill="#222" text-anchor="middle" transform="rotate(-90 917.300 383.500)" dy="2.800" textLength="55.300">Profit Margin %</text></svg>
<div class="t" style="left:641.70px;top:313.25px;font-size:7.6px;color:#555;letter-spacing:-0.081px;">total_SaleAmount</div>
<div class="t" style="left:711.50px;top:313.25px;font-size:7.6px;color:#555;letter-spacing:-0.036px;">Profit Margin %</div>
<div class="t" style="left:652.00px;top:434.24px;font-size:7.8px;color:#444;letter-spacing:-0.417px;">0M</div>
<div class="t" style="left:652.00px;top:399.84px;font-size:7.8px;color:#444;letter-spacing:-0.417px;">5M</div>
<div class="t" style="left:648.00px;top:365.44px;font-size:7.8px;color:#444;letter-spacing:-0.391px;">10M</div>
<div class="t" style="left:648.00px;top:331.04px;font-size:7.8px;color:#444;letter-spacing:-0.391px;">15M</div>
<div class="t" style="left:895.00px;top:348.04px;font-size:7.8px;color:#444;letter-spacing:-0.545px;">32.6</div>
<div class="t" style="left:895.00px;top:391.04px;font-size:7.8px;color:#444;letter-spacing:-0.545px;">32.5</div>
<div class="t" style="left:895.00px;top:434.44px;font-size:7.8px;color:#444;letter-spacing:-0.545px;">32.4</div>
<div class="t" style="left:696.25px;top:347.76px;font-size:7.2px;color:#333;letter-spacing:-0.302px;">13.8M</div>
<div class="t" style="left:744.90px;top:341.76px;font-size:7.2px;color:#333;letter-spacing:-0.402px;">12.2M</div>
<div class="t" style="left:745.85px;top:352.46px;font-size:7.2px;color:#333;letter-spacing:-0.103px;">32.57</div>
<div class="t" style="left:794.10px;top:330.86px;font-size:7.2px;color:#333;letter-spacing:-0.283px;">32.64</div>
<div class="t" style="left:792.80px;top:345.36px;font-size:7.2px;color:#333;letter-spacing:-0.255px;">11.7M</div>
<div class="t" style="left:842.15px;top:357.96px;font-size:7.2px;color:#333;letter-spacing:-0.276px;">9.8M</div>
<div class="t" style="left:841.65px;top:379.36px;font-size:7.2px;color:#333;letter-spacing:-0.103px;">32.55</div>
<div class="t" style="left:697.75px;top:428.56px;font-size:7.2px;color:#333;letter-spacing:-0.103px;">32.43</div>
<div class="t" style="left:693.05px;top:442.04px;font-size:7.8px;color:#555;letter-spacing:-0.205px;">Grocery</div>
<div class="t" style="left:738.45px;top:442.04px;font-size:7.8px;color:#555;letter-spacing:-0.426px;">Pharmacy</div>
<div class="t" style="left:781.80px;top:442.04px;font-size:7.8px;color:#555;letter-spacing:-0.259px;">Supermarket</div>
<div class="t" style="left:841.45px;top:442.04px;font-size:7.8px;color:#555;letter-spacing:-0.235px;">Kiosk</div>
<div class="t" style="left:751.90px;top:453.34px;font-size:8.2px;color:#222;letter-spacing:-0.383px;font-weight:bold;">CustomerType</div>
<svg style="left:979px;top:58px" width="21" height="80" viewBox="979 58 21 80">
<path d="M989.700 68.200l-2.300 2.400 2.300 2.400M992.400 68.200l-2.300 2.400 2.300 2.400" fill="none" stroke="#222" stroke-width="1.200"/>
<path d="M989.200 87.900v2M991.100 86.900v4M993.300 86v5.800" stroke="#222" stroke-width="1"/>
<text x="990" y="112.400" font-size="9" font-weight="bold" fill="#1a1a1a" text-anchor="middle" transform="rotate(90 990 112.400)" dy="3.100" textLength="27" lengthAdjust="spacing">Filters</text>
</svg>

<svg style="left:0;top:467px" width="1000" height="16" viewBox="0 467 1000 16">
<rect x="166" y="467" width="834" height="1" fill="#dcdcdc"/>
<rect x="862" y="475.200" width="2.600" height=".9" fill="#333"/>
<rect x="867.600" y="475.200" width="65" height=".8" fill="#7a7a7a"/>
<rect x="894" y="472.600" width="3" height="6.400" fill="#222"/>
<rect x="900.400" y="473.600" width=".8" height="4" fill="#555"/>
<path d="M937 475.600h4.600M939.300 473.300v4.600" stroke="#333" stroke-width=".9"/>
<rect x="979" y="473" width="8.600" height="5.600" rx="1" fill="none" stroke="#333" stroke-width=".9"/>
<path d="M981 475.800v1h1M985.600 475.800v1h-1M981 475.800" fill="none" stroke="#333" stroke-width=".6"/>
<path d="M1000 483V478.500a4.500 4.500 0 0 1-4.500 4.500z" fill="#222"/>
</svg>
<div class="t" style="left:950.40px;top:472.04px;font-size:8px;color:#333;letter-spacing:-0.437px;">87%</div>

</body></html>
